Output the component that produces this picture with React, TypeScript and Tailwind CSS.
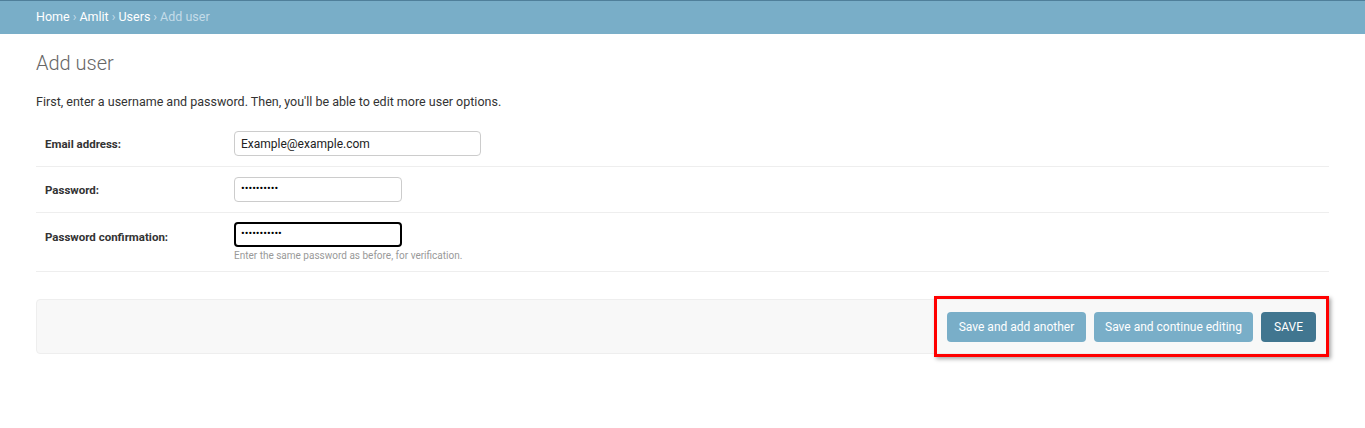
import React from 'react';

const rows = [
  { label: 'Email address:', value: 'Example@example.com', width: 'w-[247px]', type: 'text' },
  { label: 'Password:', value: '••••••••••', width: 'w-[168px]', type: 'pw' },
];

export default function App() {
  return (
    <div className="relative min-h-[428px] bg-white font-['Roboto',sans-serif] text-[#333]">
      <div className="border-t border-[#4f7f9a] bg-[#79aec8] h-[34px] flex items-center px-[36px] text-[12.5px] text-white">
        <span>Home</span>
        <span className="mx-[3px] text-[#c4dce8]">›</span>
        <span>Amlit</span>
        <span className="mx-[3px] text-[#c4dce8]">›</span>
        <span>Users</span>
        <span className="mx-[3px] text-[#c4dce8]">›</span>
        <span className="text-[#c4dce8]">Add user</span>
      </div>

      <div className="px-[36px]">
        <h1 className="mt-[17px] text-[20px] font-light text-[#666] leading-[24px]">Add user</h1>
        <p className="mt-[19px] text-[12.5px] leading-[16px] text-[#333]">
          First, enter a username and password. Then, you'll be able to edit more user options.
        </p>

        <div className="mt-[11px]">
          {rows.map((r) => (
            <div key={r.label} className="flex items-center border-b border-[#eee] pl-[9px] h-[46px]">
              <label className="w-[189px] text-[11.5px] font-bold text-[#333] pt-[2px]">{r.label}</label>
              <div
                className={`${r.width} h-[25px] border border-[#ccc] rounded-[4px] flex items-center px-[6px] ${
                  r.type === 'pw' ? 'text-[11px] text-black' : 'text-[12px] text-[#222]'
                }`}
              >
                {r.value}
              </div>
            </div>
          ))}
          <div className="flex border-b border-[#eee] pl-[9px] pt-[9px] h-[59px]">
            <label className="w-[189px] text-[11.5px] font-bold text-[#333] pt-[7px]">Password confirmation:</label>
            <div>
              <div className="w-[168px] h-[25px] border-2 border-black rounded-[4px] flex items-center px-[5px] text-[11px] text-black">
                •••••••••••
              </div>
              <div className="mt-[1px] text-[10px] text-[#999]">Enter the same password as before, for verification.</div>
            </div>
          </div>
        </div>

        <div className="mt-[27px] h-[55px] bg-[#f8f8f8] border border-[#eee] rounded-[4px] flex items-center justify-end gap-[8px] pr-[12px]">
          <button className="h-[30px] w-[139px] rounded-[4px] bg-[#79aec8] text-white text-[12px]">Save and add another</button>
          <button className="h-[30px] w-[159px] rounded-[4px] bg-[#79aec8] text-white text-[12px]">Save and continue editing</button>
          <button className="h-[30px] w-[55px] rounded-[4px] bg-[#417690] text-white text-[12px]">SAVE</button>
        </div>
      </div>

      <div className="absolute left-[934px] top-[296px] w-[395px] h-[61px] border-[3px] border-[#f00] shadow-[2px_2px_4px_rgba(0,0,0,0.35)] pointer-events-none" />
    </div>
  );
}
